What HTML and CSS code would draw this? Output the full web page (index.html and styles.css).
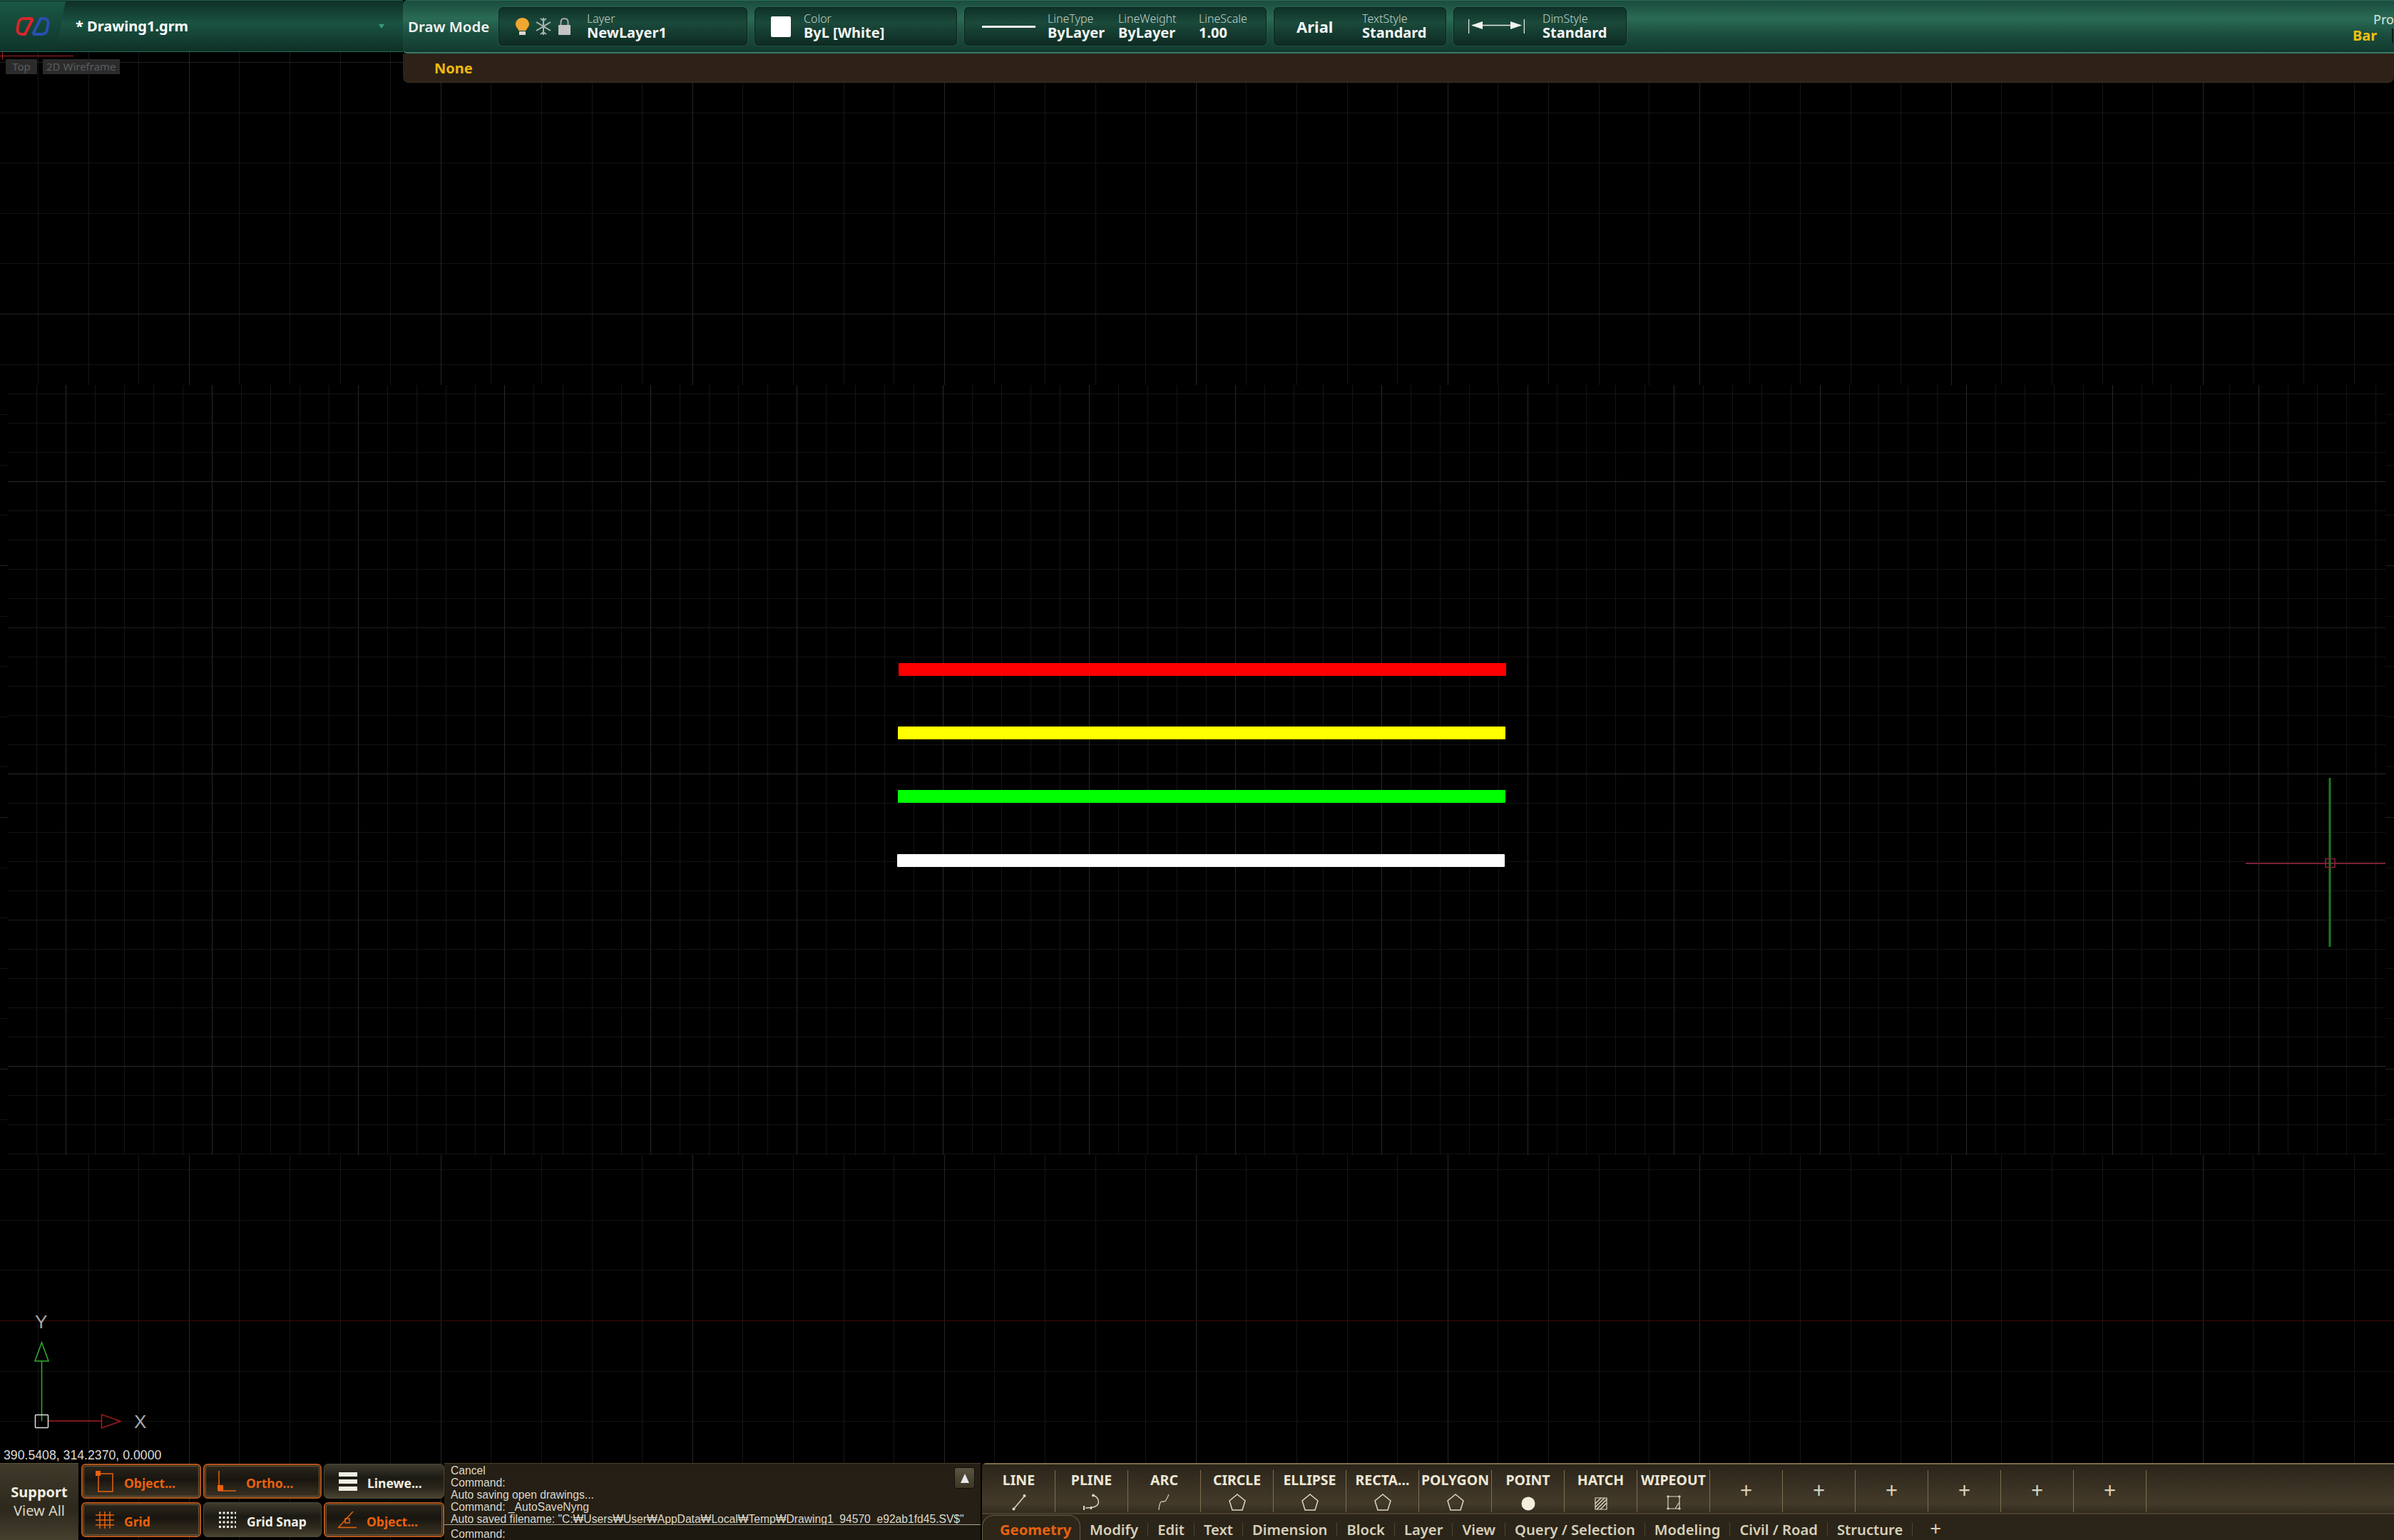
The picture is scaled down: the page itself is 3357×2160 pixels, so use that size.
FILE: index.html

```html
<!DOCTYPE html>
<html lang="en">
<head>
  <meta charset="UTF-8">
  <title>Drawing1.grm</title>
  <link rel="stylesheet" href="styles.css">
</head>
<body>

<!-- model space -->
<div class="sheet">
  <div class="sheet-band"></div>
  <svg class="drawing" width="3357" height="2160" viewBox="0 0 3357 2160">
    <line class="axis-dim" x1="0" y1="1852.5" x2="3357" y2="1852.5"/>
    <path class="corner-mark" d="M0 78.5H103M3.5 73V84"/>

    <rect x="1260" y="930" width="852" height="18" rx="1" fill="#ff0000"/>
    <rect x="1259" y="1019" width="852" height="18" rx="1" fill="#ffff00"/>
    <rect x="1259" y="1108" width="852" height="18" rx="1" fill="#00ff00"/>
    <rect x="1258" y="1198" width="852" height="18" rx="1" fill="#ffffff"/>

    <path class="cursor-x" d="M3149 1211H3345"/>
    <path class="cursor-y" d="M3267 1091V1328"/>
    <rect class="cursor-box" x="3261" y="1204.5" width="13" height="12"/>

    <path class="ucs-y" d="M58.5 1993V1909M49 1909H68L58.5 1883Z"/>
    <path class="ucs-x" d="M68 1993H142.5M142.5 1984V2003L169 1993.5Z"/>
    <rect class="ucs-box" x="49.5" y="1984.5" width="18" height="18" rx="1"/>
    <text class="ucs-label" x="49" y="1863">Y</text>
    <text class="ucs-label" x="188" y="2003">X</text>
  </svg>
</div>

<div class="app">
  <header class="top">
    <div class="top-left">
      <div class="doc-tab">
        <div class="logo-tab">
          <svg width="48" height="28" viewBox="0 0 48 28">
            <path d="M24 3H12Q5 3 4 9L2.500 18Q2 25 9 25H13L24 3" fill="none" stroke="#d8262c" stroke-width="4"/>
            <path d="M24 25H36Q43 25 44 19L45.500 10Q46 3 39 3H35L24 25" fill="none" stroke="#2a4fb0" stroke-width="4"/>
          </svg>
        </div>
        <div class="doc-name">* Drawing1.grm</div>
        <svg class="doc-arrow" width="8" height="6" viewBox="0 0 8 6"><path d="M0 0H8L4 6Z" fill="#3a9a80"/></svg>
      </div>
      <div class="view-tags">
        <span class="view-tag">Top</span>
        <span class="view-tag">2D Wireframe</span>
      </div>
    </div>

    <div class="top-main">
      <div class="toolbar">
        <div class="mode-label">Draw Mode</div>

        <div class="panel panel-layer">
          <div class="layer-icons">
            <svg width="19" height="24" viewBox="0 0 19 24">
              <path d="M9.500 0C4 0 0 4 0 9C0 12.500 3 14.500 4.500 18H14.500C16 14.500 19 12.500 19 9C19 4 15 0 9.500 0Z" fill="#f0a830"/>
              <path d="M5 19H14V24H5Z" fill="#d8d8d0"/>
            </svg>
            <svg width="22" height="24" viewBox="0 0 22 24">
              <path d="M11 0V24M1 6L21 18M21 6L1 18M7 1L11 4L15 1M7 23L11 20L15 23" fill="none" stroke="#a9b2ae" stroke-width="2"/>
            </svg>
            <svg width="19" height="24" viewBox="0 0 19 24">
              <path d="M4.500 11V6Q4.500 1 9.500 1Q14.500 1 14.500 6V11" fill="none" stroke="#a8a8a8" stroke-width="2"/>
              <rect x="1" y="10" width="17" height="14" rx="1" fill="#c4c4c4"/>
            </svg>
          </div>
          <div class="field">
            <span class="field-name">Layer</span>
            <span class="field-value">NewLayer1</span>
          </div>
        </div>

        <div class="panel panel-color">
          <div class="swatch"></div>
          <div class="field">
            <span class="field-name">Color</span>
            <span class="field-value">ByL [White]</span>
          </div>
        </div>

        <div class="panel panel-line">
          <div class="line-sample"></div>
          <div class="field field-type">
            <span class="field-name">LineType</span>
            <span class="field-value">ByLayer</span>
          </div>
          <div class="field field-weight">
            <span class="field-name">LineWeight</span>
            <span class="field-value">ByLayer</span>
          </div>
          <div class="field">
            <span class="field-name">LineScale</span>
            <span class="field-value">1.00</span>
          </div>
        </div>

        <div class="panel panel-font">
          <div class="font-name">Arial</div>
          <div class="field">
            <span class="field-name">TextStyle</span>
            <span class="field-value">Standard</span>
          </div>
        </div>

        <div class="panel panel-dim">
          <svg width="79" height="20" viewBox="0 0 79 20">
            <path d="M.5 0V20M78.500 0V20M6 8.500H73" fill="none" stroke="#e8e8e4" stroke-width="1.500"/>
            <path d="M4 8.500L20 3V14ZM75 8.500L59 3V14Z" fill="#f2f2ee"/>
          </svg>
          <div class="field">
            <span class="field-name">DimStyle</span>
            <span class="field-value">Standard</span>
          </div>
        </div>

        <div class="prop-box">
          <div class="prop-name">Prop</div>
          <div class="prop-row"><span class="prop-value">Bar</span></div>
        </div>
      </div>
      <div class="cmd-status"><span>None</span></div>
    </div>
  </header>

  <div class="spacer"></div>

  <footer class="bottom">
    <div class="readout">390.5408, 314.2370, 0.0000</div>
    <div class="bottom-bar">
      <div class="support">
        <div class="support-title">Support</div>
        <div>View All</div>
      </div>

      <div class="snaps">
        <div class="snap on">
          <svg width="26" height="30" viewBox="0 0 26 30"><path d="M4 4H24V29H4Z" fill="none" stroke="#e8620f" stroke-width="1.500"/><rect width="7" height="7" fill="#e8620f"/></svg>
          <span>Object...</span>
        </div>
        <div class="snap on">
          <svg width="26" height="30" viewBox="0 0 26 30"><path d="M2 0V28H26" fill="none" stroke="#e8620f" stroke-width="1.500"/><rect x="0" y="20" width="8" height="8" fill="#e8620f"/></svg>
          <span>Ortho...</span>
        </div>
        <div class="snap">
          <svg width="26" height="26" viewBox="0 0 26 26"><path d="M0 0H26V6H0ZM0 10H26V16H0ZM0 20H26V26H0Z" fill="#f0eee4"/></svg>
          <span class="snap-plain">Linewe...</span>
        </div>
        <div class="snap on">
          <svg width="26" height="24" viewBox="0 0 26 24"><path d="M6 0V24M13 0V24M20 0V24M0 5H26M0 12H26M0 19H26" fill="none" stroke="#e8620f" stroke-width="1.500"/></svg>
          <span>Grid</span>
        </div>
        <div class="snap">
          <svg width="26" height="24" viewBox="0 0 26 24"><path d="M1 2H25M1 8.500H25M1 15H25M1 21.500H25" fill="none" stroke="#f0eee4" stroke-width="3" stroke-dasharray="3 2.500"/></svg>
          <span class="snap-plain">Grid Snap</span>
        </div>
        <div class="snap on">
          <svg width="26" height="24" viewBox="0 0 26 24"><path d="M1 22L21 0M0 22.500H26" fill="none" stroke="#e8620f" stroke-width="1.500"/><rect x="10" y="10" width="6" height="6" fill="none" stroke="#e8620f" stroke-width="1.500"/></svg>
          <span>Object...</span>
        </div>
      </div>

      <div class="console">
        <div class="console-log">
          <div>Cancel</div>
          <div>Command:</div>
          <div>Auto saving open drawings...</div>
          <div>Command: _AutoSaveNyng</div>
          <div>Auto saved filename: "C:₩Users₩User₩AppData₩Local₩Temp₩Drawing1_94570_e92ab1fd45.SV$"</div>
          <button class="console-up"><svg width="12" height="13" viewBox="0 0 12 13"><path d="M6 0L12 13H0Z" fill="#e8e8ec"/></svg></button>
        </div>
        <div class="console-input">Command:</div>
      </div>

      <div class="ribbon">
        <div class="tools">
          <div class="tool"><span>LINE</span>
            <svg width="20" height="24" viewBox="0 0 20 24"><path d="M2 22L18 3" stroke="#ddd8c6" stroke-width="1.500"/><circle cx="2.500" cy="21.500" r="2" fill="#ddd8c6"/><circle cx="17.500" cy="3" r="2" fill="#ddd8c6"/></svg>
          </div>
          <div class="tool"><span>PLINE</span>
            <svg width="24" height="24" viewBox="0 0 24 24"><path d="M14 2Q23 6 21 14Q19 20 3 20" fill="none" stroke="#ddd8c6" stroke-width="1.500"/><circle cx="14" cy="2.500" r="2" fill="#ddd8c6"/><path d="M1 17V23M11 18V22" stroke="#ddd8c6" stroke-width="2"/></svg>
          </div>
          <div class="tool"><span>ARC</span>
            <svg width="20" height="24" viewBox="0 0 20 24"><path d="M2 23Q3 10 7 11Q11 12 12 9Q14 6 16 1" fill="none" stroke="#c9c4b2" stroke-width="1.300"/></svg>
          </div>
          <div class="tool"><span>CIRCLE</span><svg class="ico-pentagon" width="26" height="24" viewBox="0 0 26 24"><path d="M13 1L24 10L20 23H6L2 10Z"/></svg></div>
          <div class="tool"><span>ELLIPSE</span><svg class="ico-pentagon" width="26" height="24" viewBox="0 0 26 24"><path d="M13 1L24 10L20 23H6L2 10Z"/></svg></div>
          <div class="tool"><span>RECTA...</span><svg class="ico-pentagon" width="26" height="24" viewBox="0 0 26 24"><path d="M13 1L24 10L20 23H6L2 10Z"/></svg></div>
          <div class="tool"><span>POLYGON</span><svg class="ico-pentagon" width="26" height="24" viewBox="0 0 26 24"><path d="M13 1L24 10L20 23H6L2 10Z"/></svg></div>
          <div class="tool"><span>POINT</span>
            <svg width="20" height="20" viewBox="0 0 20 20"><circle cx="10" cy="10" r="9.500" fill="#f4efdc"/></svg>
          </div>
          <div class="tool"><span>HATCH</span>
            <svg width="20" height="20" viewBox="0 0 20 20"><path d="M2 2H18V18H2Z" fill="none" stroke="#ddd8c6" stroke-width="1.200"/><path d="M2 10L10 2M2 15L15 2M4 18L18 4M9 18L18 9" stroke="#ddd8c6" stroke-width="1.500"/></svg>
          </div>
          <div class="tool"><span>WIPEOUT</span>
            <svg width="22" height="22" viewBox="0 0 22 22"><path d="M3 2H19V19H3ZM19 10L13 19" fill="none" stroke="#ddd8c6" stroke-width="1.200"/><path d="M1 2H5M17 2H21M1 19H5M17 19H21M3 0V4M19 0V4M3 17V21M19 17V21" stroke="#ddd8c6"/></svg>
          </div>
          <div class="tool tool-add">+</div>
          <div class="tool tool-add">+</div>
          <div class="tool tool-add">+</div>
          <div class="tool tool-add">+</div>
          <div class="tool tool-add">+</div>
          <div class="tool tool-add">+</div>
        </div>
        <nav class="tabs">
          <a class="tab active">Geometry</a>
          <a class="tab">Modify</a>
          <a class="tab">Edit</a>
          <a class="tab">Text</a>
          <a class="tab">Dimension</a>
          <a class="tab">Block</a>
          <a class="tab">Layer</a>
          <a class="tab">View</a>
          <a class="tab">Query / Selection</a>
          <a class="tab">Modeling</a>
          <a class="tab">Civil / Road</a>
          <a class="tab">Structure</a>
          <a class="tab tab-add">+</a>
        </nav>
      </div>
    </div>
  </footer>
</div>

</body>
</html>
```

FILE: styles.css

```css
html, body {
  margin: 0;
  padding: 0;
  background: #000;
  font-family: "Noto Sans", "Open Sans", sans-serif;
}
body {
  position: relative;
  width: 3357px;
  height: 2160px;
  overflow: hidden;
}

/* model space */
.sheet {
  position: absolute;
  inset: 0;
  background-color: #000;
  background-image:
    repeating-linear-gradient(90deg, transparent 0 265px, #262626 265px 266px, transparent 266px 353px),
    repeating-linear-gradient(180deg, transparent 0 87px, #222 87px 88px, transparent 88px 353px),
    repeating-linear-gradient(90deg, transparent 0 53px, #161616 53px 54px, transparent 54px 70.6px),
    repeating-linear-gradient(180deg, transparent 0 16.4px, #121212 16.4px 17.4px, transparent 17.4px 70.6px);
}
.sheet-band {
  position: absolute;
  left: 11px;
  top: 540px;
  width: 3334px;
  height: 1080px;
  background-color: #000;
  background-image:
    repeating-linear-gradient(90deg, transparent 0 81px, #282828 81px 82px, transparent 82px 205px),
    repeating-linear-gradient(180deg, transparent 0 135px, #2a2a2a 135px 136px, transparent 136px 410px),
    repeating-linear-gradient(180deg, transparent 0 135px, #1c1c1c 135px 136px, transparent 136px 205px),
    repeating-linear-gradient(90deg, transparent 0 40px, #151515 40px 41px),
    repeating-linear-gradient(180deg, transparent 0 12px, #131313 12px 13px, transparent 13px 41px);
}
.drawing {
  position: absolute;
  left: 0;
  top: 0;
}
.axis-dim { stroke: #3a0c0c; stroke-width: 1; }
.corner-mark { fill: none; stroke: #a82020; stroke-width: 1; }
.cursor-x { stroke: #7c2036; stroke-width: 2; fill: none; }
.cursor-y { stroke: #1f7a1f; stroke-width: 3; fill: none; }
.cursor-box { fill: none; stroke: #8a2044; stroke-width: 1.5; }
.ucs-y { fill: none; stroke: #2fae2f; stroke-width: 1.5; }
.ucs-x { fill: none; stroke: #a41c1c; stroke-width: 1.5; }
.ucs-box { fill: none; stroke: #e0e0e0; stroke-width: 1.5; }
.ucs-label {
  fill: #a8a8a8;
  font-family: "Liberation Sans", sans-serif;
  font-size: 26px;
}

.app {
  position: relative;
  display: flex;
  flex-direction: column;
  height: 2160px;
}
.spacer {
  flex: 1;
}

/* top */
.top {
  display: flex;
  align-items: flex-start;
}
.top-left {
  width: 565px;
  flex: none;
}
.doc-tab {
  display: flex;
  align-items: center;
  height: 73px;
  box-sizing: border-box;
  border-top: 1px solid #1f5a48;
  border-bottom: 1px solid #2c6a57;
  background: linear-gradient(#0f2f27, #1a5342 45%, #0f2f27);
}
.logo-tab {
  display: flex;
  align-items: center;
  justify-content: center;
  width: 92px;
  height: 70px;
  flex: none;
  border-radius: 0 0 10px 0;
  background: linear-gradient(#1a5846, #0e3429);
  clip-path: polygon(0 0, 100% 0, 85% 100%, 0 100%);
}
.doc-name {
  margin-left: 14px;
  color: #fff;
  font-size: 20px;
  font-weight: 700;
  white-space: pre;
}
.doc-arrow {
  margin-left: auto;
  margin-right: 26px;
}
.view-tags {
  display: flex;
  gap: 8px;
  padding: 10px 0 0 8px;
}
.view-tag {
  padding: 0 5px;
  height: 21px;
  line-height: 21px;
  background: #2b2b2b;
  color: #5c5c5c;
  font-size: 15px;
}
.view-tag:first-child {
  width: 34px;
  text-align: center;
}
.top-main {
  flex: 1;
  min-width: 0;
}
.toolbar {
  display: flex;
  align-items: center;
  gap: 10px;
  height: 75px;
  box-sizing: border-box;
  border-top: 1px solid #2c6a57;
  border-bottom: 2px solid #3a7a66;
  border-radius: 6px 0 0 6px;
  background: linear-gradient(#1a4c3d 0, #2a6b55 35%, #1b4e3e 65%, #123a2e 100%);
  overflow: hidden;
}
.mode-label {
  width: 120px;
  flex: none;
  margin-right: -3px;
  padding-left: 7px;
  color: #f2f2f2;
  font-size: 20.5px;
  font-weight: 600;
  white-space: nowrap;
}
.panel {
  display: flex;
  align-items: center;
  flex: none;
  height: 54px;
  box-sizing: border-box;
  border: 1px solid #0c241c;
  border-radius: 6px;
  background: linear-gradient(#0f3128, #1a4a3b 40%, #0e2b23);
  box-shadow: 0 0 2px #3a7a66;
}
.panel-layer { width: 349px; padding-left: 23px; }
.panel-color { width: 284px; padding-left: 22px; }
.panel-line  { width: 424px; padding-left: 24px; }
.panel-font  { width: 242px; padding-left: 31px; }
.panel-dim   { width: 243px; padding-left: 20px; }

.layer-icons {
  display: flex;
  align-items: center;
  gap: 9px;
  margin-right: 22px;
}
.field {
  display: flex;
  flex-direction: column;
  white-space: nowrap;
}
.field-name {
  height: 20px;
  line-height: 22px;
  color: #c4d2cc;
  font-size: 16px;
  font-weight: 300;
}
.field-value {
  height: 24px;
  line-height: 22px;
  color: #f4f4f4;
  font-size: 20px;
  font-weight: 700;
}
.swatch {
  width: 28px;
  height: 29px;
  margin-right: 18px;
  border-radius: 2px;
  background: #fff;
}
.line-sample {
  width: 75px;
  height: 3px;
  margin-right: 17px;
  background: #f4f4f4;
}
.field-type { width: 99px; }
.field-weight { width: 113px; }
.font-name {
  width: 92px;
  color: #f4f4f4;
  font-size: 22px;
  font-weight: 700;
}
.panel-dim svg {
  flex: none;
  margin-right: 25px;
}
.prop-box {
  flex: none;
  width: 58px;
  margin-left: auto;
  overflow: hidden;
}
.prop-name {
  padding-left: 29px;
  color: #d8e4df;
  font-size: 18px;
  line-height: 26px;
}
.prop-row {
  display: flex;
  height: 20px;
  width: 55px;
  border-right: 2px solid #081c15;
}
.prop-value {
  color: #f0c010;
  font-size: 20px;
  font-weight: 700;
  line-height: 20px;
}
.cmd-status {
  display: flex;
  align-items: center;
  height: 40px;
  padding-left: 44px;
  border-radius: 0 0 8px 8px;
  border-bottom: 1px solid #3c3020;
  background: #2e2218;
  color: #f2b90f;
  font-size: 20px;
  font-weight: 700;
}

/* bottom */
.readout {
  height: 22px;
  padding-left: 5px;
  line-height: 22px;
  color: #dcdcdc;
  font-family: "Liberation Sans", sans-serif;
  font-size: 17.7px;
  white-space: nowrap;
}
.bottom-bar {
  display: flex;
  height: 108px;
}
.support {
  width: 110px;
  flex: none;
  padding-top: 27px;
  box-sizing: border-box;
  background: linear-gradient(#3f3a2a, #2c281c 60%, #453f2e);
  border-top: 1px solid #5a5138;
  color: #d8d4c4;
  font-size: 20px;
  line-height: 26px;
  text-align: center;
}
.support-title {
  color: #f0ede0;
  font-weight: 700;
}
.snaps {
  display: grid;
  grid-template-columns: 168px 166px 169px;
  grid-template-rows: 49px 49px;
  gap: 5px 3px;
  flex: none;
  width: 513px;
  padding: 1px 0 0 4px;
  box-sizing: border-box;
}
.snap {
  display: flex;
  align-items: center;
  gap: 14px;
  padding-left: 20px;
  box-sizing: border-box;
  border: 1px solid #4d4938;
  border-radius: 6px;
  background: linear-gradient(#3e3b2d, #1c1a14 40%, #2a261b 70%, #4a4432);
  color: #f0eee4;
  font-size: 17.5px;
  font-weight: 700;
  white-space: nowrap;
}
.snap svg {
  flex: none;
}
.snap span {
  margin-top: 4px;
}
.snap.on {
  padding-left: 18px;
  border: 2px solid #b5561c;
  outline: 1px solid #6d5a3a;
  outline-offset: -4px;
  color: #e8620f;
  background: linear-gradient(#2c271c, #181510 45%, #2a2419 70%, #3a3224);
}
.snap-plain {
  color: #f0eee4;
}
.console {
  display: flex;
  flex-direction: column;
  flex: none;
  width: 752px;
  box-sizing: border-box;
  border-top: 1px solid #4a412c;
  background: #251f15;
  color: #dcd9cc;
  font-family: "Liberation Sans", sans-serif;
  font-size: 15.65px;
  line-height: 17px;
  white-space: nowrap;
}
.console-log {
  position: relative;
  height: 86px;
  padding: 1px 0 0 9px;
  box-sizing: border-box;
  border-bottom: 1px solid #a8a594;
  overflow: hidden;
}
.console-input {
  padding: 4px 0 0 9px;
  background: #1d1810;
}
.console-up {
  position: absolute;
  right: 8px;
  top: 5px;
  display: flex;
  align-items: center;
  justify-content: center;
  width: 29px;
  height: 30px;
  padding: 0;
  border: 1px solid #14100a;
  border-radius: 3px;
  background: linear-gradient(#5a5440, #3c3626);
}
.ribbon {
  display: flex;
  flex-direction: column;
  flex: 1;
  margin-left: 2px;
  min-width: 0;
  border-top: 2px solid #7d6c45;
  border-radius: 6px 0 0 0;
  background: #2b2418;
}
.tools {
  display: flex;
  height: 70px;
  padding: 8px 0 0 1px;
  box-sizing: border-box;
  border-bottom: 2px solid #4a4030;
  background: linear-gradient(#2a2419, #3e3526 60%, #433a2a 80%, #332b1e);
}
.tool {
  display: flex;
  flex-direction: column;
  align-items: center;
  justify-content: space-between;
  width: 102px;
  height: 59px;
  box-sizing: border-box;
  padding: 1px 0 2px;
  border-right: 1px solid #7d6f50;
  color: #ece7d6;
  font-size: 19.5px;
  font-weight: 700;
  line-height: 26px;
  white-space: nowrap;
}
.tool svg {
  flex: none;
}
.ico-pentagon {
  fill: none;
  stroke: #ddd8c6;
  stroke-width: 1.500;
}
.tool-add {
  justify-content: center;
  padding: 0 0 3px;
  color: #d8d2bc;
  font-size: 30px;
  font-weight: 400;
}
.tabs {
  display: flex;
  align-items: center;
  flex: 1;
  padding-top: 5px;
  color: #d6d0bb;
  font-size: 20.2px;
  font-weight: 600;
  white-space: nowrap;
}
.tab {
  padding: 0 13px;
  line-height: 18px;
  border-right: 1px solid #4e4532;
}
.tab.active {
  align-self: stretch;
  display: flex;
  align-items: center;
  width: 138px;
  box-sizing: border-box;
  margin-top: -4px;
  padding: 4px 0 0 24px;
  border: 1px solid #6a5e42;
  border-bottom: none;
  border-radius: 16px 16px 0 0;
  background: #2d2619;
  color: #e8620f;
  font-weight: 700;
}
.tab-add {
  padding: 0 0 4px 24px;
  border-right: none;
  font-size: 28px;
  font-weight: 400;
}
```
